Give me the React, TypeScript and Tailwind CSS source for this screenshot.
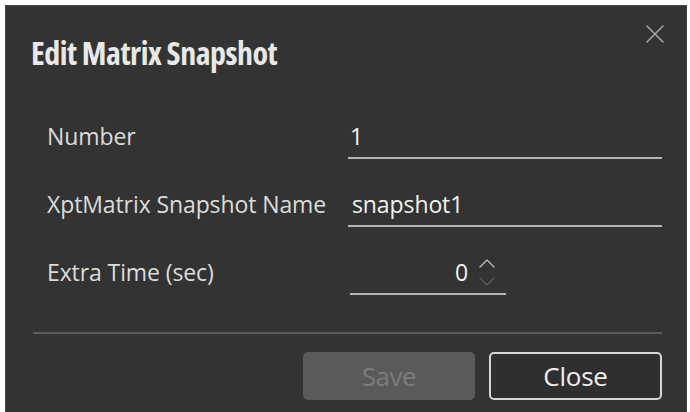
export default function App() {
  return (
    <div className="w-[690px] h-[412px] bg-white pl-[5px] pt-[5px] pr-[3px] overflow-hidden font-['Open_Sans',_sans-serif]">
      <div className="relative h-[407px] bg-[#333333] border-l border-t border-r border-[#474747] pl-[27px] pr-[24px] pt-[28px]">
        <button className="absolute right-[21px] top-[18px] size-[20px] flex items-center justify-center">
          <svg width="20" height="20" viewBox="0 0 20 20" fill="none" stroke="#a3a3a3" strokeWidth="1.6" strokeLinecap="round">
            <path d="M2 2 L18 18 M18 2 L2 18" />
          </svg>
        </button>

        <h1 className="-ml-[2px] text-[32px] leading-[37px] font-bold font-stretch-[80%] text-[#e8e8e8] tracking-[-0.5px]">
          Edit Matrix Snapshot
        </h1>

        <div className="mt-[20px] pl-[14px] flex flex-col text-[23px] tracking-[-0.1px]">
          <div className="flex items-end h-[68px]">
            <span className="w-[301px] leading-[28px] pb-[9px] text-[#dcdcdc]">Number</span>
            <div className="flex-1 leading-[28px] pb-[7px] pl-[2px] border-b-2 border-[#b4b4b4] text-[#f2f2f2]">1</div>
          </div>
          <div className="flex items-end h-[68px]">
            <span className="w-[301px] leading-[28px] pb-[9px] text-[#dcdcdc] whitespace-nowrap">XptMatrix Snapshot Name</span>
            <div className="flex-1 leading-[28px] pb-[7px] pl-[4px] border-b-2 border-[#b4b4b4] text-[#f2f2f2]">snapshot1</div>
          </div>
          <div className="flex items-end h-[68px]">
            <span className="w-[303px] leading-[28px] pb-[9px] text-[#dcdcdc]">Extra Time (sec)</span>
            <div className="w-[156px] flex items-center justify-end gap-[9px] pb-[5px] pr-[9px] border-b-2 border-[#b4b4b4] text-[#f2f2f2]">
              <span className="leading-[28px]">0</span>
              <svg width="20" height="32" viewBox="0 0 20 32" fill="none" strokeWidth="1.4" strokeLinecap="round" strokeLinejoin="round">
                <path d="M3 11 L10 4 L17 11" stroke="#b8b8b8" />
                <path d="M3 22 L10 29 L17 22" stroke="#5c5c5c" />
              </svg>
            </div>
          </div>
        </div>

        <div className="mt-[37px] h-[2px] bg-[#5c5c5c]" />

        <div className="mt-[18px] flex justify-end gap-[14px]">
          <button className="w-[172px] h-[48px] rounded-[5px] bg-[#5a5a5a] text-[26px] text-[#7c7c7c] tracking-[-0.5px]">
            Save
          </button>
          <button className="w-[173px] h-[48px] rounded-[5px] border-2 border-[#d6d6d6] bg-[#2f2f2f] text-[26px] text-[#ededed] tracking-[-0.2px]">
            Close
          </button>
        </div>
      </div>
    </div>
  );
}
